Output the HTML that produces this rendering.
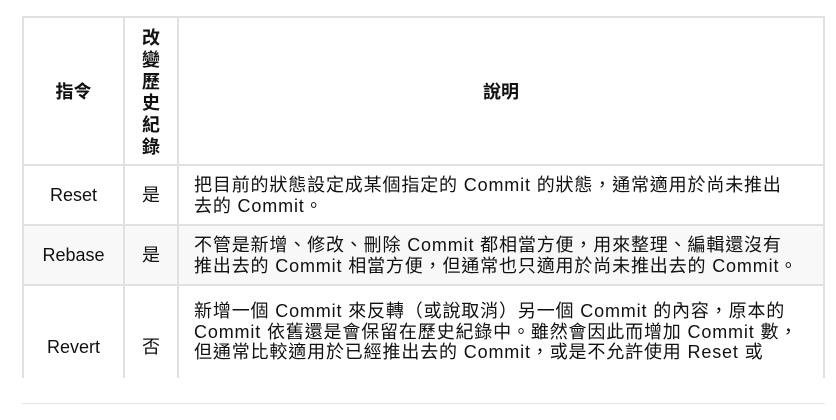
<!DOCTYPE html>
<html><head><meta charset="utf-8"><style>
html,body{margin:0;padding:0;background:#fff;width:836px;height:420px;overflow:hidden}
body{font-family:"Liberation Sans","Noto Sans CJK TC",sans-serif;font-size:18px;color:#111;position:relative}
.h{position:absolute;height:2px;background:#e1e1e1}
.v{position:absolute;width:2px;background:#e1e1e1}
.t{position:absolute;white-space:nowrap;line-height:20.5px}
.d{letter-spacing:0.85px}
.c{text-align:center}
b{font-weight:bold}
</style></head><body>
<div style="position:absolute;left:22px;top:225px;width:802px;height:60px;background:#f8f8f8"></div>
<div class="h" style="left:22px;top:16px;width:803px"></div>
<div class="h" style="left:22px;top:164px;width:803px"></div>
<div class="h" style="left:22px;top:224px;width:803px"></div>
<div class="h" style="left:22px;top:284px;width:803px"></div>
<div class="v" style="left:22px;top:16px;height:362px"></div>
<div class="v" style="left:123px;top:16px;height:362px"></div>
<div class="v" style="left:177px;top:16px;height:362px"></div>
<div class="v" style="left:823px;top:16px;height:362px"></div>
<div class="h" style="left:22px;top:403px;width:803px;height:1px;background:#e6e6e6"></div>

<div class="t c" style="left:24px;width:99px;top:82px"><b>指令</b></div>
<div class="t c" style="left:125px;width:52px;top:28px;line-height:21.8px"><b>改<br>變<br>歷<br>史<br>紀<br>錄</b></div>
<div class="t c" style="left:179px;width:644px;top:82px"><b>說明</b></div>

<div class="t c" style="left:24px;width:99px;top:185px">Reset</div>
<div class="t c" style="left:125px;width:52px;top:185px">是</div>
<div class="t d" style="left:194px;top:175px">把目前的狀態設定成某個指定的 Commit 的狀態，通常適用於尚未推出<br>去的 Commit。</div>

<div class="t c" style="left:24px;width:99px;top:245px">Rebase</div>
<div class="t c" style="left:125px;width:52px;top:245px">是</div>
<div class="t d" style="left:194px;top:235px">不管是新增、修改、刪除 Commit 都相當方便，用來整理、編輯還沒有<br>推出去的 Commit 相當方便，但通常也只適用於尚未推出去的 Commit。</div>

<div class="t c" style="left:24px;width:99px;top:337px">Revert</div>
<div class="t c" style="left:125px;width:52px;top:337px">否</div>
<div class="t d" style="left:194px;top:301px">新增一個 Commit 來反轉（或說取消）另一個 Commit 的內容，原本的<br>Commit 依舊還是會保留在歷史紀錄中。雖然會因此而增加 Commit 數，<br>但通常比較適用於已經推出去的 Commit，或是不允許使用 Reset 或</div>
</body></html>
